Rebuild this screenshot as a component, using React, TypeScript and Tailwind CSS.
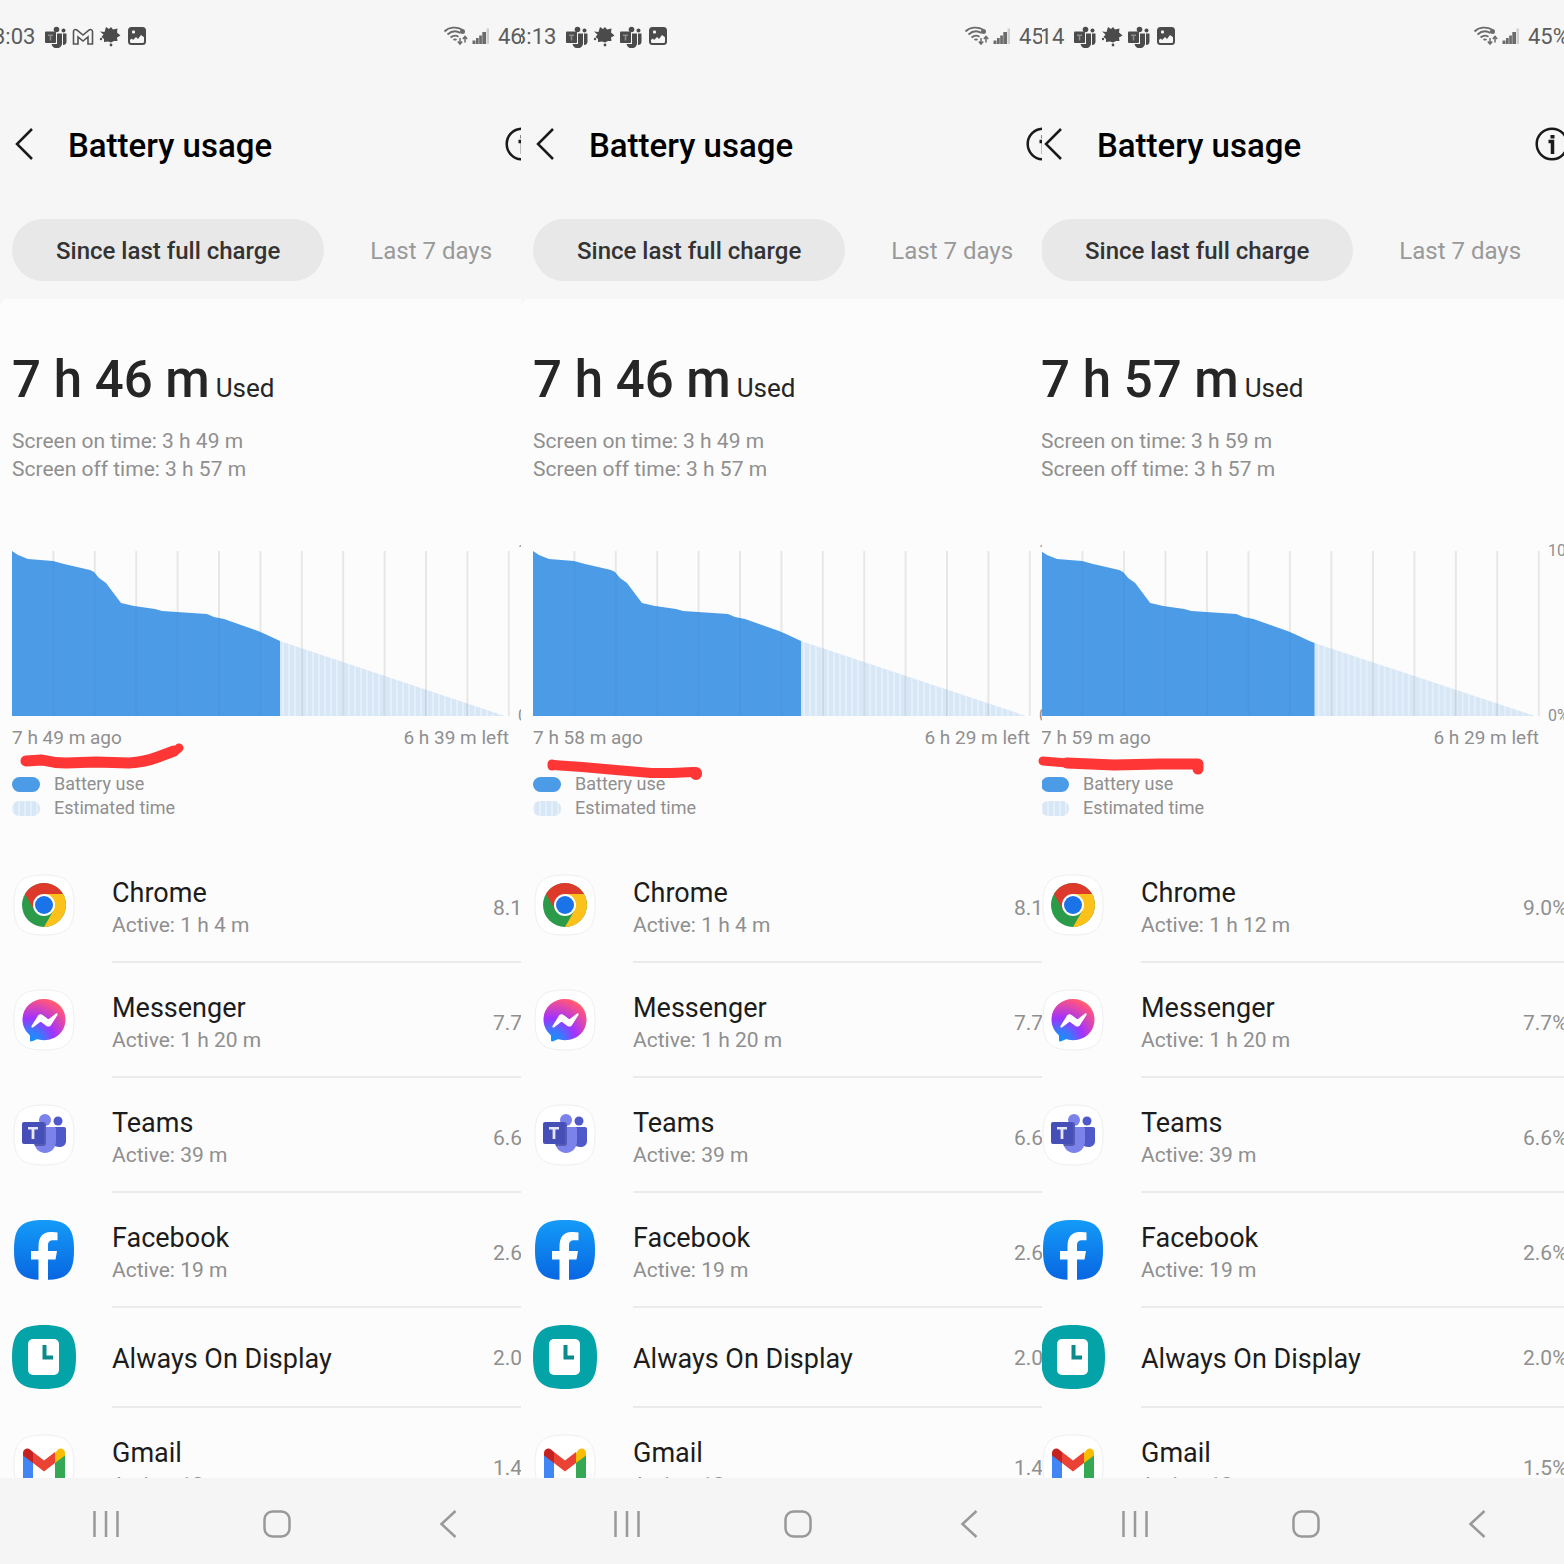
import { useId } from "react";
import type { ReactNode } from "react";

type StatusIcon = "teams" | "gmail" | "leaf" | "image";

type AppUsage = {
  name: string;
  active?: string;
  percent: string;
  icon: ReactNode;
};

type Screen = {
  time: string;
  statusIcons: StatusIcon[];
  battery: string;
  used: string;
  screenOn: string;
  screenOff: string;
  ago: string;
  left: string;
  level: [number, number][];
  marker: ReactNode;
  apps: AppUsage[];
  // the last capture is cropped a little further in from the left
  cropped?: boolean;
};

const SQUIRCLE = "M32 2C55 2 62 9 62 32S55 62 32 62 2 55 2 32 9 2 32 2Z";

/* ---------- App icons ---------- */

function WhiteTile({ children }: { children: ReactNode }) {
  return (
    <svg viewBox="0 0 64 64" className="mb-0.5 size-16" aria-hidden="true">
      <path d={SQUIRCLE} fill="#fff" stroke="#efefef" strokeWidth="1" />
      {children}
    </svg>
  );
}

function ChromeIcon() {
  return (
    <WhiteTile>
      <circle cx="32" cy="32" r="22" fill="#2b9a49" />
      <path d="M32 32 41.500 37.500 32 54A22 22 0 0 0 51 21H32Z" fill="#fcc21b" />
      <path d="M32 21H51A22 22 0 0 0 13 21L22.500 37.500 32 32Z" fill="#dd3a2b" />
      <circle cx="32" cy="32" r="11" fill="#fff" />
      <circle cx="32" cy="32" r="9" fill="#1a73e8" />
    </WhiteTile>
  );
}

function MessengerIcon() {
  const id = useId();
  return (
    <WhiteTile>
      <defs>
        <radialGradient id={id} cx="0.2" cy="1" r="1.1">
          <stop offset="0" stopColor="#0a95ff" />
          <stop offset="0.25" stopColor="#3f76ff" />
          <stop offset="0.5" stopColor="#a033ff" />
          <stop offset="0.92" stopColor="#ff5280" />
          <stop offset="1" stopColor="#ff7061" />
        </radialGradient>
      </defs>
      <path
        d="M32 11C19.500 11 10.500 20 10.500 31.500c0 6 2.500 11.300 6.700 15 .7.700.8 1 .8 2.200v3.200c0 1.200 1 1.900 2.200 1.400l4-1.800c1-.4 1.500-.3 2.500 0 1.700.4 3.500.7 5.300.7 12.500 0 21.500-9 21.500-20.700S44.500 11 32 11Z"
        fill={`url(#${id})`}
      />
      <path
        d="m19.500 38 6.400-10.200c1-1.600 3.200-2 4.700-.9l5 3.800c.5.400 1.100.4 1.600 0L44 25.500c.9-.7 2.100.4 1.500 1.400l-6.400 10.200c-1 1.600-3.200 2-4.700.9l-5-3.800c-.5-.4-1.100-.4-1.600 0L21 39.400c-.9.700-2.100-.4-1.500-1.400Z"
        fill="#fff"
      />
    </WhiteTile>
  );
}

function TeamsIcon() {
  return (
    <WhiteTile>
      <circle cx="46" cy="18" r="4.500" fill="#5059c9" />
      <path d="M39 24h13a2 2 0 0 1 2 2v12c0 4-3 6-7 6s-8-3-8-8Z" fill="#5059c9" />
      <circle cx="33" cy="17" r="6" fill="#7b83eb" />
      <path d="M22 24h20a2 2 0 0 1 2 2v12c0 7-5 12-11 12s-11-5-11-12Z" fill="#7b83eb" />
      <path d="M27 19h4a3 3 0 0 1 3 3v18a3 3 0 0 1-3 3h-8c-1-2-1-4-1-6Z" fill="#545bb5" />
      <rect x="10" y="19" width="22" height="22" rx="2" fill="#464eb8" />
      <path d="M16 24h10v2.500h-3.600V36h-2.800v-9.500H16Z" fill="#e6e7f7" />
    </WhiteTile>
  );
}

function FacebookIcon() {
  const id = useId();
  return (
    <svg viewBox="0 0 64 64" className="mb-0.5 size-16" aria-hidden="true">
      <defs>
        <linearGradient id={id} x1="0" y1="0" x2="0" y2="1">
          <stop offset="0" stopColor="#149bf8" />
          <stop offset="1" stopColor="#0866e2" />
        </linearGradient>
      </defs>
      <path d={SQUIRCLE} fill={`url(#${id})`} />
      <path
        d="M26.500 62V41.500H19V33h7.500v-5c0-8.500 4-14 12-14 3 0 5 .2 7 .6v7.600h-4c-4 0-5.500 1.800-5.500 5.300V33h9l-1.500 8.500H36V62Z"
        fill="#fff"
      />
    </svg>
  );
}

function ClockIcon() {
  return (
    <svg viewBox="0 0 64 64" className="mb-0.5 size-16" aria-hidden="true">
      <path d="M32 0C56 0 64 8 64 32S56 64 32 64 0 56 0 32 8 0 32 0Z" fill="#03a3a8" />
      <rect x="16" y="14" width="31" height="36" rx="5" fill="#fff" />
      <path d="M32.500 20v12.500H41" fill="none" stroke="#0b8a8e" strokeWidth="4" />
    </svg>
  );
}

function GmailIcon() {
  return (
    <WhiteTile>
      <path d="M11 21v26a3 3 0 0 0 3 3h7V28Z" fill="#4285f4" />
      <path d="M53 21v26a3 3 0 0 1-3 3h-7V28Z" fill="#34a853" />
      <path d="M43 20v10l10-7.500V20c0-4-4.500-5.500-7-3.500Z" fill="#fbbc04" />
      <path d="M21 30V19l11 8.500L43 19v11l-11 8.500Z" fill="#ea4335" />
      <path d="M11 20v2.500L21 30V19l-3-2.500c-2.500-2-7-.5-7 3.500Z" fill="#c5221f" />
    </WhiteTile>
  );
}

/* ---------- Status bar ---------- */

function StatusGlyph({ kind }: { kind: StatusIcon }) {
  if (kind === "teams") {
    return (
      <svg viewBox="0 0 22 22" className="size-[22px]" fill="#4b4b4b" aria-hidden="true">
        <circle cx="11.500" cy="3.500" r="2.800" />
        <circle cx="18.500" cy="4.500" r="2" />
        <path d="M12 7.500h5v8.500A5.200 5.200 0 0 1 6.500 18H12Z" />
        <path d="M18 7.500h3.500v8c0 2.500-1.500 3.500-3.500 3.500Z" />
        <rect x="0" y="5.500" width="11" height="11.500" rx="1" />
        <path d="M3 8.500h5v1.500H6.300V14.500H4.700V10H3Z" fill="#8d8d8d" />
      </svg>
    );
  }
  if (kind === "gmail") {
    return (
      <svg viewBox="0 0 22 22" className="size-[22px]" fill="none" stroke="#555" strokeWidth="1.600" aria-hidden="true">
        <path d="M1.500 18V5.500c0-2 2-2.500 3.300-1.500L11 9l6.200-5c1.300-1 3.300-.5 3.300 1.500V18H16v-7l-5 4-5-4v7Z" />
      </svg>
    );
  }
  if (kind === "leaf") {
    return (
      <svg viewBox="0 0 22 22" className="size-[22px]" fill="#4b4b4b" aria-hidden="true">
        <path d="m7 1 3 2 2-2 2 2.500 4.500-1-.5 4 3.500 3-3.500 2 .5 3.500-3.500 0-3 1.500-3-1-4 .5 0-3-2.500-2 2-2.500-3.500-3 4.500.5Z" />
        <circle cx="2" cy="13" r="1.200" />
        <circle cx="12" cy="19" r="1.400" />
      </svg>
    );
  }
  return (
    <svg viewBox="0 0 22 22" className="size-[22px]" aria-hidden="true">
      <rect x="3" y="2" width="16" height="16" rx="2.500" fill="none" stroke="#4b4b4b" strokeWidth="2" />
      <path d="M3 2h16v10l-4-3-3 4-2-2-3 3-1-1.500-3 2Z" fill="#4b4b4b" />
      <rect x="6" y="4.500" width="3" height="3" rx="1" fill="#f6f6f6" />
    </svg>
  );
}

function WifiGlyph() {
  return (
    <svg viewBox="0 0 26 22" className="h-[22px] w-[26px]" fill="none" stroke="#6b6b6b" strokeWidth="1.800" aria-hidden="true">
      <path d="M1.500 5.500C6 1 13.500.5 19 3.500M4.500 8.500c4-3.500 9-4 13-1.500M7.500 11.500c2.500-2 5.500-2.300 8-.8M10.500 14c1-.8 2-.8 3 0" />
      <circle cx="19.500" cy="5.500" r="2.500" fill="#6b6b6b" stroke="none" />
      <path d="M17 12v5M14.800 15.500l2.200 2.500 2.200-2.500M22 16.500v-6M19.800 13l2.200-2.500 2.200 2.500" strokeWidth="1.500" />
    </svg>
  );
}

function SignalGlyph() {
  return (
    <svg viewBox="0 0 18 22" className="h-[22px] w-[18px]" fill="#6b6b6b" aria-hidden="true">
      <path d="M.5 14.500h3V18h-3ZM4 12h2.700v6H4ZM7.200 9.500h2.700V18H7.200ZM10.300 6h3.700v12h-3.700Z" />
      <path d="M14.500 2.500H17V18h-2.500Z" fill="#cfcfcf" />
    </svg>
  );
}

function StatusBar({ time, icons, battery }: { time: string; icons: StatusIcon[]; battery: string }) {
  return (
    <div className="flex h-[72px] items-center pt-0.5 text-[22px] leading-6 text-[#5c5c5c]">
      <span className="-ml-[7px]">{time}</span>
      <div className="ml-[10px] flex gap-[5px]">
        {icons.map((kind, i) => (
          <StatusGlyph key={i} kind={kind} />
        ))}
      </div>
      <div className="ml-auto flex items-center gap-[3px]">
        <WifiGlyph />
        <SignalGlyph />
        <span className="ml-[5px] w-[41px] whitespace-nowrap">{battery}</span>
      </div>
    </div>
  );
}

/* ---------- Chart ---------- */

function GridLines({ opacity }: { opacity: number }) {
  return Array.from({ length: 12 }, (_, i) => (
    <rect key={i} x={(i + 1) * 41.4 - 1} y="0" width="2" height="165" fill="#000" fillOpacity={opacity} />
  ));
}

function BatteryChart({ level }: { level: [number, number][] }) {
  const id = useId();
  const [endX, endY] = level[level.length - 1];
  const line = level.map(([x, y]) => `${x} ${y}`).join("L");
  return (
    <div className="flex gap-2">
      <svg
        viewBox="0 0 498 165"
        preserveAspectRatio="none"
        className="h-[165px] min-w-0 flex-1"
        role="img"
        aria-label="Battery level over time"
      >
        <defs>
          <pattern id={id} width="6" height="165" patternUnits="userSpaceOnUse">
            <rect width="6" height="165" fill="#d8e7f6" />
            <rect width="2" height="165" fill="#e4effa" />
          </pattern>
        </defs>
        <path d={`M${endX} ${endY}L493 165H${endX}Z`} fill={`url(#${id})`} />
        <GridLines opacity={0.06} />
        <path d={`M${line}V165H0Z`} fill="#4c9be6" />
        <GridLines opacity={0.025} />
      </svg>
      <div className="-my-2 flex w-[21px] flex-col justify-between whitespace-nowrap text-base leading-4 text-[#8f8f8f]">
        <span>100%</span>
        <span>0%</span>
      </div>
    </div>
  );
}

function Legend() {
  const id = useId();
  return (
    <ul className="mt-5 text-[18px] leading-6 text-[#8f8f8f]">
      <li className="flex items-center gap-[14px]">
        <span className="h-[15px] w-7 rounded-full bg-[#4c9be6]" />
        Battery use
      </li>
      <li className="flex items-center gap-[14px]">
        <svg viewBox="0 0 28 15" className="h-[15px] w-7" aria-hidden="true">
          <defs>
            <pattern id={id} width="6" height="15" patternUnits="userSpaceOnUse">
              <rect width="6" height="15" fill="#d8e7f6" />
              <rect width="2" height="15" fill="#e4effa" />
            </pattern>
          </defs>
          <rect width="28" height="15" rx="7" fill={`url(#${id})`} />
        </svg>
        Estimated time
      </li>
    </ul>
  );
}

/* ---------- Screen ---------- */

function AppRow({ app }: { app: AppUsage }) {
  return (
    <li className="flex items-center gap-9">
      {app.icon}
      <div
        className={`flex flex-1 items-center justify-between border-b-2 border-[#ebebeb] ${app.active ? "h-[115px] pt-2" : "h-[100px] pt-1"}`}
      >
        <div>
          <p className="text-[27px] leading-8 text-[#1c1c1c]">{app.name}</p>
          {app.active && <p className="text-[21px] leading-8 text-[#8f8f8f]">Active: {app.active}</p>}
        </div>
        <span className="w-[46px] text-[21px] text-[#8f8f8f]">{app.percent}</span>
      </div>
    </li>
  );
}

function NavBar() {
  return (
    <nav className="grid h-[86px] shrink-0 grid-cols-3 items-center justify-items-center bg-[#f5f5f5] pt-1.5 pr-1.5 pl-5">
      <button type="button" aria-label="Recent apps">
        <svg viewBox="0 0 28 28" className="size-7" stroke="#999" strokeWidth="2.500" aria-hidden="true">
          <path d="M2.500 1v26M14 1v26M25.500 1v26" />
        </svg>
      </button>
      <button type="button" aria-label="Home">
        <svg viewBox="0 0 28 28" className="size-7" fill="none" stroke="#999" strokeWidth="2.500" aria-hidden="true">
          <rect x="1.500" y="1.500" width="25" height="25" rx="8" />
        </svg>
      </button>
      <button type="button" aria-label="Back">
        <svg viewBox="0 0 28 28" className="size-7" fill="none" stroke="#999" strokeWidth="2.500" aria-hidden="true">
          <path d="M21.500 1 7.500 14l14 13" />
        </svg>
      </button>
    </nav>
  );
}

function BatteryScreen({ screen }: { screen: Screen }) {
  return (
    <section className="relative min-w-0">
      <div className="h-full overflow-hidden">
        <div
          className={`flex h-full w-[calc(100%+18px)] flex-col bg-[#f6f6f6] ${screen.cropped ? "-ml-[13px]" : ""}`}
        >
          <StatusBar time={screen.time} icons={screen.statusIcons} battery={screen.battery} />

          <header className="flex h-[147px] items-center pb-[3px] pl-[15px]">
            <button type="button" aria-label="Navigate up">
              <svg viewBox="0 0 18 34" className="h-[34px] w-[18px]" fill="none" stroke="#1a1a1a" strokeWidth="2.500" aria-hidden="true">
                <path d="M17 2 2 17l15 15" />
              </svg>
            </button>
            <h1 className="ml-[35px] pt-[3px] text-[33px] leading-10 font-medium text-black">Battery usage</h1>
            <button type="button" aria-label="Information" className="ml-auto">
              <svg viewBox="0 0 34 34" className="size-[34px]" fill="none" stroke="#1a1a1a" aria-hidden="true">
                <circle cx="17" cy="17" r="15.300" strokeWidth="2.500" />
                <path d="M13.500 14.500h4V27" strokeWidth="3.500" />
                <path d="M17.500 8v3.500" strokeWidth="4" />
              </svg>
            </button>
          </header>

          <div role="tablist" className="flex px-3">
            <button
              type="button"
              role="tab"
              aria-selected="true"
              className="h-[62px] rounded-full bg-[#e8e8e8] px-11 pt-0.5 text-2xl font-medium whitespace-nowrap text-[#333]"
            >
              Since last full charge
            </button>
            <button
              type="button"
              role="tab"
              aria-selected="false"
              className="h-[62px] px-[46px] pt-0.5 text-2xl whitespace-nowrap text-[#999]"
            >
              Last 7 days
            </button>
          </div>

          <main className="mt-[18px] min-h-0 flex-1 overflow-hidden rounded-t-lg bg-[#fcfcfc] pl-3">
            <p className="mt-[51px] flex items-baseline gap-1.5 leading-[60px] text-[#262626]">
              <span className="text-[51px] font-medium">{screen.used}</span>
              <span className="text-[26px]">Used</span>
            </p>
            <div className="mt-[9px] mb-[68px] text-[21px] leading-7 text-[#8f8f8f]">
              <p>Screen on time: {screen.screenOn}</p>
              <p>Screen off time: {screen.screenOff}</p>
            </div>

            <BatteryChart level={screen.level} />
            <div className="mt-2 flex justify-between pr-[30px] text-[19px] leading-7 text-[#8f8f8f]">
              <span>{screen.ago}</span>
              <span>{screen.left}</span>
            </div>
            <Legend />

            <ul className="mt-7">
              {screen.apps.map((app) => (
                <AppRow key={app.name} app={app} />
              ))}
            </ul>
          </main>

          <NavBar />
        </div>
      </div>

      {/* hand-drawn marker under the "ago" label */}
      <svg
        className="pointer-events-none absolute top-[730px] left-0 h-14 w-full overflow-visible"
        fill="none"
        stroke="#ff3636"
        strokeWidth="11"
        strokeLinecap="round"
        strokeLinejoin="round"
        aria-hidden="true"
      >
        {screen.marker}
      </svg>
    </section>
  );
}

const level: [number, number][] = [
  [0, 0], [6, 4], [16, 8], [41, 10], [52, 13], [78, 19], [82, 21], [87, 27], [94, 32], [103, 44],
  [109, 52], [122, 55], [143, 58], [150, 60], [195, 63], [202, 66], [212, 68], [229, 74],
  [246, 80], [253, 83], [268, 90],
];

function buildApps(chrome: [string, string], gmail: string): AppUsage[] {
  return [
    { name: "Chrome", active: chrome[0], percent: chrome[1], icon: <ChromeIcon /> },
    { name: "Messenger", active: "1 h 20 m", percent: "7.7%", icon: <MessengerIcon /> },
    { name: "Teams", active: "39 m", percent: "6.6%", icon: <TeamsIcon /> },
    { name: "Facebook", active: "19 m", percent: "2.6%", icon: <FacebookIcon /> },
    { name: "Always On Display", percent: "2.0%", icon: <ClockIcon /> },
    { name: "Gmail", active: "12 m", percent: gmail, icon: <GmailIcon /> },
  ];
}

const screens: Screen[] = [
  {
    time: "3:03",
    statusIcons: ["teams", "gmail", "leaf", "image"],
    battery: "46%",
    used: "7 h 46 m",
    screenOn: "3 h 49 m",
    screenOff: "3 h 57 m",
    ago: "7 h 49 m ago",
    left: "6 h 39 m left",
    level,
    marker: (
      <>
        <path d="M26 31 42 30Q54 33 66 33L96 32 129 33Q145 32 158 27L174 21" />
        <path d="M174 21Q179 19 179 18" strokeWidth="9" />
      </>
    ),
    apps: buildApps(["1 h 4 m", "8.1%"], "1.4%"),
  },
  {
    time: "3:13",
    statusIcons: ["teams", "leaf", "teams", "image"],
    battery: "45%",
    used: "7 h 46 m",
    screenOn: "3 h 49 m",
    screenOff: "3 h 57 m",
    ago: "7 h 58 m ago",
    left: "6 h 29 m left",
    level,
    marker: (
      <>
        <path d="M31 34v2" strokeWidth="9" />
        <path d="M32 35 61 37 95 40 130 43 151 43 172 42" strokeWidth="10" />
        <path d="M174 43h1v1" strokeWidth="12" />
      </>
    ),
    apps: buildApps(["1 h 4 m", "8.1%"], "1.4%"),
  },
  {
    time: "3:14",
    statusIcons: ["teams", "leaf", "teams", "image"],
    battery: "45%",
    used: "7 h 57 m",
    screenOn: "3 h 59 m",
    screenOff: "3 h 57 m",
    ago: "7 h 59 m ago",
    left: "6 h 29 m left",
    level: [...level, [273, 92]],
    marker: (
      <>
        <path d="M1 31 25 33" strokeWidth="9" />
        <path d="M25 33 72 35 117 34H156V39" />
      </>
    ),
    apps: buildApps(["1 h 12 m", "9.0%"], "1.5%"),
    cropped: true,
  },
];

export default function App() {
  return (
    <div className="grid h-screen grid-cols-[521fr_521fr_522fr] grid-rows-1 overflow-hidden bg-[#f6f6f6] font-[Roboto,sans-serif]">
      {screens.map((screen) => (
        <BatteryScreen key={screen.time} screen={screen} />
      ))}
    </div>
  );
}
